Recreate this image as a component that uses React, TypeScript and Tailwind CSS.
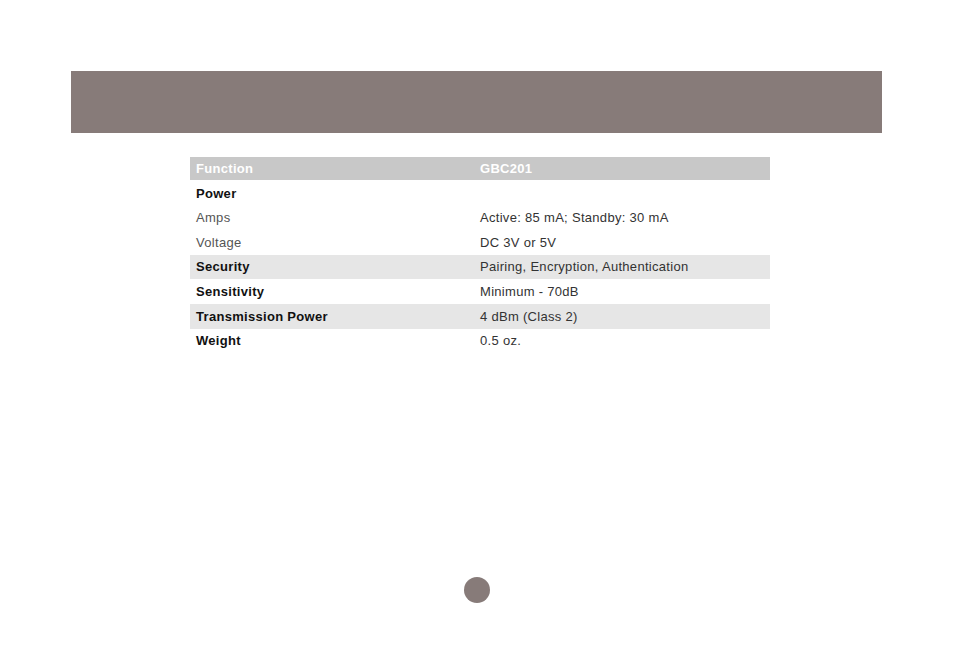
import React from "react";

const rows: { label: string; value: string; bold: boolean; shaded: boolean }[] = [
  { label: "Power", value: "", bold: true, shaded: false },
  { label: "Amps", value: "Active: 85 mA; Standby: 30 mA", bold: false, shaded: false },
  { label: "Voltage", value: "DC 3V or 5V", bold: false, shaded: false },
  { label: "Security", value: "Pairing, Encryption, Authentication", bold: true, shaded: true },
  { label: "Sensitivity", value: "Minimum - 70dB", bold: true, shaded: false },
  { label: "Transmission Power", value: "4 dBm (Class 2)", bold: true, shaded: true },
  { label: "Weight", value: "0.5 oz.", bold: true, shaded: false },
];

export default function App() {
  return (
    <div
      className="w-[954px] h-[664px] bg-white flex flex-col items-center"
      style={{ fontFamily: '"Liberation Sans", Arial, sans-serif' }}
    >
      <div className="mt-[71px] w-[811px] h-[62px] mr-[1px] bg-[#877b79]" />
      <div className="mt-[24px] w-[580px] ml-[6px] flex flex-col text-[13px] tracking-[0.3px]">
        <div className="h-[23px] bg-[#c8c8c8] text-white font-bold flex items-center">
          <div className="w-[284px] pl-[6px]">Function</div>
          <div className="pl-[6px]">GBC201</div>
        </div>
        <div className="h-[1px]" />
        {rows.map((r) => (
          <div
            key={r.label}
            className={`h-[24.6px] flex items-center ${r.shaded ? "bg-[#e6e6e6]" : "bg-white"}`}
          >
            <div className={`w-[284px] pl-[6px] ${r.bold ? "font-bold text-[#111]" : "text-[#555]"}`}>{r.label}</div>
            <div className="pl-[6px] text-[#333]">{r.value}</div>
          </div>
        ))}
      </div>
      <div className="mt-[224px] w-[26px] h-[26px] rounded-full bg-[#877b79]" />
    </div>
  );
}
